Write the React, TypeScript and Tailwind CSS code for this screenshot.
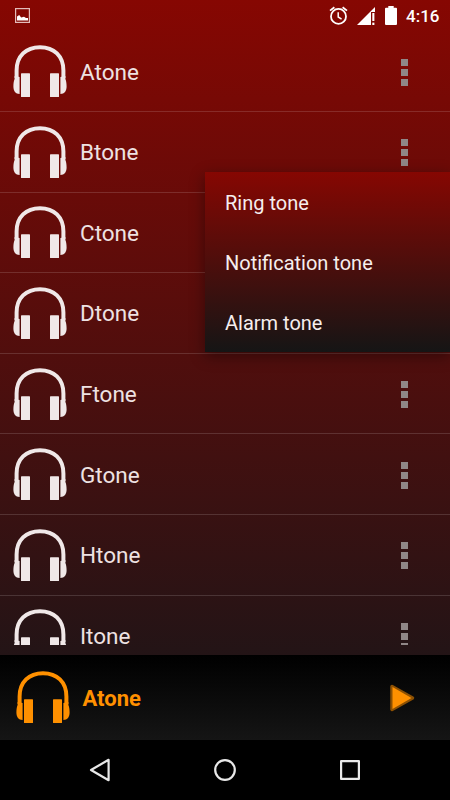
import { useState } from 'react';

const tones = ['Atone', 'Btone', 'Ctone', 'Dtone', 'Ftone', 'Gtone', 'Htone', 'Itone'];
const menuItems = ['Ring tone', 'Notification tone', 'Alarm tone'];

function Headphones({ className }: { className: string }) {
  return (
    <svg width="54" height="54" viewBox="0 0 54 54" fill="currentColor" className={className}>
      <path d="M3.6 34V26.5C3.6 12 13 3.2 27 3.2S50.4 12 50.4 26.5V34" fill="none" stroke="currentColor" strokeWidth="4" />
      <path d="M1.6 32L6.6 33V50C2.5 50 0.4 47 0.4 42.5C0.4 39 0.8 37 1.6 35Z" />
      <path d="M52.4 32L47.4 33V50C51.5 50 53.6 47 53.6 42.5C53.6 39 53.2 37 52.4 35Z" />
      <rect x="8" y="29.3" width="9" height="23.7" rx="0.6" />
      <rect x="37" y="29.3" width="9" height="23.7" rx="0.6" />
    </svg>
  );
}

function StatusBar() {
  return (
    <div className="flex h-[31.3px] shrink-0 items-start justify-between text-white">
      <svg width="15" height="15" viewBox="0 0 15 15" className="mt-2 ml-[15px]">
        <rect x="0.6" y="0.6" width="13.8" height="13.8" fill="none" stroke="#e3bcb9" strokeWidth="1.2" />
        <path d="M2 12.6V8.6L4.2 7L6.2 9.4L9 8.7L11 10H13V12.6Z" fill="white" />
      </svg>
      <div className="flex">
        <svg width="19" height="20" viewBox="0 0 19 20" className="mt-1.5" fill="none" stroke="white" strokeWidth="1.8">
          <circle cx="9.5" cy="10.4" r="7.5" />
          <path d="M9.2 6.2V11L12.6 13.1" strokeWidth="1.5" />
          <path d="M1 4.6L5.4 1.2M18 4.6L13.6 1.2" />
        </svg>
        <svg width="18" height="18" viewBox="0 0 18 18" className="mt-[7px] ml-[9px]" fill="white">
          <path d="M0 18L18 0V5H14V18Z" />
          <rect x="15.3" y="6" width="2.1" height="8" />
          <rect x="15.3" y="15.6" width="2.1" height="2.4" />
        </svg>
        <svg width="12" height="19" viewBox="0 0 12 19" className="mt-1.5 ml-2.5" fill="white">
          <path d="M3.3 0H8.7V1.8H11Q12 1.8 12 2.8V18Q12 19 11 19H1Q0 19 0 18V2.8Q0 1.8 1 1.8H3.3Z" />
        </svg>
        <span className="mt-1 mr-[11px] ml-[9px] w-[33px] text-[17px] leading-6 font-medium whitespace-nowrap">4:16</span>
      </div>
    </div>
  );
}

function MoreButton({ onClick }: { onClick: () => void }) {
  return (
    <button onClick={onClick} aria-label="More" className="mt-0.5 mr-[42px] flex w-[7px] flex-col gap-[3px]">
      <span className="h-[7px] bg-[#908787]" />
      <span className="h-[7px] bg-[#908787]" />
      <span className="h-[7px] bg-[#908787]" />
    </button>
  );
}

function PopupMenu() {
  return (
    <div className="absolute top-[172px] right-0 w-[245px] bg-linear-to-b/srgb from-[#860702] to-[#151515] shadow-[0_4px_14px_rgba(0,0,0,0.4)]">
      {menuItems.map((item) => (
        <div key={item} className="flex h-[60px] items-center pt-px pl-5 text-[20px] text-[#f6eeee]">
          {item}
        </div>
      ))}
    </div>
  );
}

export default function App() {
  const [menuOpen, setMenuOpen] = useState(true);

  return (
    <div className="relative flex h-[800px] w-[450px] flex-col overflow-hidden bg-black font-[Roboto,sans-serif]">
      <div className="flex h-[655px] shrink-0 flex-col bg-linear-to-b/srgb from-[#860702] to-[#231416]">
        <StatusBar />
        <div className="h-[613.7px] overflow-hidden">
          {tones.map((tone) => (
            <div key={tone} className="flex h-[80.62px] items-center border-b border-white/14">
              <Headphones className="ml-[13px] shrink-0 text-[#f0e8e8]" />
              <span className="ml-[13px] flex-1 pt-px text-[22.5px] leading-7 text-[#eee2e2]">{tone}</span>
              <MoreButton onClick={() => setMenuOpen(!menuOpen)} />
            </div>
          ))}
        </div>
      </div>

      <div className="flex h-[85px] shrink-0 items-center bg-linear-to-b/srgb from-black to-[#151515] text-[#ff9000]">
        <Headphones className="mb-0.5 ml-[15.5px] shrink-0" />
        <span className="ml-[13px] flex-1 pt-0.5 text-[22px] font-bold">Atone</span>
        <svg width="26" height="28" viewBox="0 0 26 28" className="mr-[35px]">
          <path d="M3 2.5L23.5 14L3 25.5Z" fill="#ff9000" stroke="#8c5003" strokeWidth="3.5" strokeLinejoin="round" />
          <path d="M3.5 3L22.5 14L3.5 25Z" fill="#ff9000" />
        </svg>
      </div>

      <div className="flex h-[60px] shrink-0 items-center justify-between px-[88px]">
        <svg width="24" height="26" viewBox="0 0 24 26" fill="none" stroke="#e8e8e8" strokeWidth="2.2" strokeLinejoin="round">
          <path d="M20.6 2.8V23.2L3 13Z" />
        </svg>
        <svg width="24" height="24" viewBox="0 0 24 24" fill="none" stroke="#e8e8e8" strokeWidth="2.2">
          <circle cx="12" cy="12" r="9.8" />
        </svg>
        <svg width="24" height="24" viewBox="0 0 24 24" fill="none" stroke="#e8e8e8" strokeWidth="2.2" strokeLinejoin="round">
          <rect x="3.1" y="3.1" width="17.8" height="17.8" />
        </svg>
      </div>

      {menuOpen && <PopupMenu />}
    </div>
  );
}
